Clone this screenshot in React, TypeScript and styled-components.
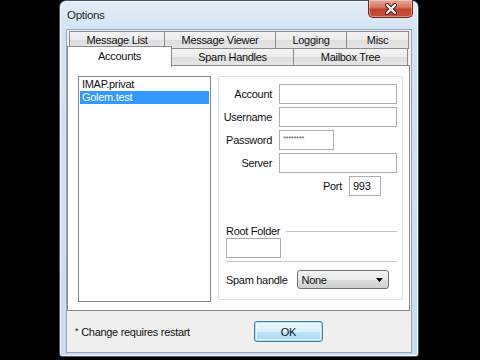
import React from "react";
import styled, { createGlobalStyle } from "styled-components";

const Global = createGlobalStyle`
  html, body { margin: 0; padding: 0; background: #000; }
  body { width: 480px; height: 360px; overflow: hidden; font-family: "Liberation Sans", Arial, sans-serif; font-size: 11px; letter-spacing: -0.3px; color: #111; }
`;

const Screen = styled.div`
  width: 480px;
  height: 360px;
  background: #000;
  display: flex;
  align-items: flex-start;
  padding-left: 59px;
  box-sizing: border-box;
`;

const Window = styled.div`
  width: 360px;
  height: 357px;
  box-sizing: border-box;
  border: 1px solid #4a5560;
  border-radius: 7px 7px 3px 3px;
  background: linear-gradient(#e3edf8 0px, #d4e3f4 30px, #c9dcf1 100%);
  box-shadow: inset 0 0 0 1px #f2f7fd;
  display: flex;
  flex-direction: column;
`;

const TitleBar = styled.div`
  height: 28px;
  display: flex;
  align-items: flex-start;
  justify-content: space-between;
  padding-left: 7px;
  padding-right: 5px;
`;

const Title = styled.div`
  font-family: "Liberation Sans", Arial, sans-serif;
  font-size: 11.5px;
  letter-spacing: -0.3px;
  color: #1e2a38;
  margin-top: 8px;
`;

const CloseButton = styled.div`
  width: 45px;
  height: 18px;
  margin-top: -1px;
  box-sizing: border-box;
  border: 1px solid #6e2a22;
  border-top: none;
  border-radius: 0 0 5px 5px;
  background: linear-gradient(#e9a99a 0%, #d87a68 40%, #c3432f 55%, #c9503a 100%);
  box-shadow: inset 0 0 0 1px rgba(255, 220, 210, 0.45);
  display: flex;
  align-items: center;
  justify-content: center;
`;

const Client = styled.div`
  margin: 0 6px 3px 6px;
  flex: 1;
  box-sizing: border-box;
  border: 1px solid #92a6bf;
  background: #f0f0f0;
  display: flex;
  flex-direction: column;
  padding-top: 1px;
`;

const TabRow = styled.div<{ $first?: boolean }>`
  display: flex;
  height: ${(p) => (p.$first ? 17 : 18)}px;
  padding-left: ${(p) => (p.$first ? 2 : 0)}px;
  position: relative;
  z-index: ${(p) => (p.$first ? 0 : 2)};
`;

const Tab = styled.div<{ $w: number; $selected?: boolean }>`
  width: ${(p) => p.$w}px;
  box-sizing: border-box;
  height: ${(p) => (p.$selected ? 21 : 18)}px;
  margin-top: ${(p) => (p.$selected ? -2 : 0)}px;
  border: 1px solid #898c95;
  border-bottom: ${(p) => (p.$selected ? "none" : "1px solid #898c95")};
  margin-left: -1px;
  background: ${(p) =>
    p.$selected ? "#ffffff" : "linear-gradient(#f3f3f3 0%, #ebebeb 50%, #dedede 51%, #e5e5e5 100%)"};
  display: flex;
  align-items: center;
  justify-content: center;
  padding-bottom: ${(p) => (p.$selected ? 3 : 1)}px;
  &:first-child { margin-left: 0; }
`;

const Panel = styled.div`
  width: 343px;
  height: 246px;
  margin-top: -1px;
  box-sizing: border-box;
  border: 1px solid #898c95;
  background: #fff;
  display: flex;
  gap: 7px;
  padding: 10px 6px 0 10px;
  position: relative;
  z-index: 1;
`;

const ListBox = styled.div`
  width: 133px;
  height: 226px;
  box-sizing: border-box;
  border: 1px solid #828790;
  padding: 1px;
  display: flex;
  flex-direction: column;
`;

const ListItem = styled.div<{ $selected?: boolean }>`
  height: 13px;
  line-height: 13px;
  padding-left: 2px;
  color: ${(p) => (p.$selected ? "#fff" : "#111")};
  background: ${(p) => (p.$selected ? "#3399ff" : "transparent")};
`;

const GroupBox = styled.div`
  width: 185px;
  height: 224px;
  box-sizing: border-box;
  border: 1px solid #d5dfe5;
  border-radius: 2px;
  padding: 7px 5px 0 0;
  display: flex;
  flex-direction: column;
`;

const Fields = styled.div`
  display: flex;
  flex-direction: column;
  gap: 3px;
`;

const FieldRow = styled.div`
  display: flex;
  align-items: center;
  height: 20px;
`;

const Label = styled.div<{ $w: number }>`
  width: ${(p) => p.$w}px;
  text-align: right;
  margin-right: 7px;
  white-space: nowrap;
`;

const TextBox = styled.div<{ $w: number }>`
  width: ${(p) => p.$w}px;
  height: 20px;
  box-sizing: border-box;
  border: 1px solid #abadb3;
  background: #fff;
  display: flex;
  align-items: center;
  padding-left: 3px;
`;

const Masked = styled.span`
  font-size: 8px;
  color: #666;
  letter-spacing: -0.5px;
  margin-top: -4px;
`;

const RootSection = styled.div`
  padding-left: 7px;
  margin-top: 28px;
  display: flex;
  flex-direction: column;
`;

const SectionHead = styled.div`
  display: flex;
  align-items: center;
  height: 13px;
  gap: 6px;
`;

const Rule = styled.div`
  flex: 1;
  height: 1px;
  background: #c5c5c5;
  margin-top: 2px;
`;

const Separator = styled.div`
  height: 1px;
  background: #c5c5c5;
  margin-top: 3px;
`;

const SpamRow = styled.div`
  display: flex;
  align-items: center;
  margin-top: 8px;
  gap: 9px;
`;

const Combo = styled.div`
  width: 92px;
  height: 19px;
  box-sizing: border-box;
  border: 1px solid #707070;
  border-radius: 3px;
  background: linear-gradient(#f2f2f2 0%, #ebebeb 50%, #dddddd 51%, #cfcfcf 100%);
  display: flex;
  align-items: center;
  justify-content: space-between;
  padding: 0 5px 0 4px;
`;

const Footer = styled.div`
  flex: 1;
  display: flex;
  align-items: center;
  padding-left: 8px;
`;

const Note = styled.div`
  display: flex;
  align-items: baseline;
  gap: 3px;
`;

const Star = styled.span`
  font-size: 9px;
  position: relative;
  top: -2px;
`;

const OkButton = styled.div`
  width: 69px;
  height: 21px;
  margin-left: auto;
  margin-right: 88px;
  box-sizing: border-box;
  border: 1px solid #3c7fb1;
  border-radius: 3px;
  background: linear-gradient(#eaf6fd 0%, #d9f0fc 50%, #bee6fd 51%, #a7d9f5 100%);
  box-shadow: inset 0 0 0 1px #aee2fb, inset 0 0 0 2px rgba(255, 255, 255, 0.6);
  display: flex;
  align-items: center;
  justify-content: center;
`;

const rowOne = [
  { label: "Message List", w: 96 },
  { label: "Message Viewer", w: 112 },
  { label: "Logging", w: 72 },
  { label: "Misc", w: 63 },
];

const rowTwo = [
  { label: "Accounts", w: 105, selected: true },
  { label: "Spam Handles", w: 123 },
  { label: "Mailbox Tree", w: 115 },
];

export default function App() {
  return (
    <>
      <Global />
      <Screen>
        <Window>
          <TitleBar>
            <Title>Options</Title>
            <CloseButton>
              <svg width="14" height="12" viewBox="0 0 14 12">
                <path d="M3 2 L11 10 M11 2 L3 10" stroke="#4a1a14" strokeWidth="4" strokeLinecap="round" />
                <path d="M3 2 L11 10 M11 2 L3 10" stroke="#ffffff" strokeWidth="2.2" strokeLinecap="round" />
              </svg>
            </CloseButton>
          </TitleBar>
          <Client>
            <TabRow $first>
              {rowOne.map((t) => (
                <Tab key={t.label} $w={t.w}>{t.label}</Tab>
              ))}
            </TabRow>
            <TabRow>
              {rowTwo.map((t) => (
                <Tab key={t.label} $w={t.w} $selected={t.selected}>{t.label}</Tab>
              ))}
            </TabRow>
            <Panel>
              <ListBox>
                <ListItem>IMAP.privat</ListItem>
                <ListItem $selected>Golem.test</ListItem>
              </ListBox>
              <GroupBox>
                <Fields>
                  <FieldRow>
                    <Label $w={53}>Account</Label>
                    <TextBox $w={118} />
                  </FieldRow>
                  <FieldRow>
                    <Label $w={53}>Username</Label>
                    <TextBox $w={118} />
                  </FieldRow>
                  <FieldRow>
                    <Label $w={53}>Password</Label>
                    <TextBox $w={55}>
                      <Masked>********</Masked>
                    </TextBox>
                  </FieldRow>
                  <FieldRow>
                    <Label $w={53}>Server</Label>
                    <TextBox $w={118} />
                  </FieldRow>
                  <FieldRow>
                    <Label $w={123}>Port</Label>
                    <TextBox $w={32}>993</TextBox>
                  </FieldRow>
                </Fields>
                <RootSection>
                  <SectionHead>
                    <span>Root Folder</span>
                    <Rule />
                  </SectionHead>
                  <TextBox $w={55} style={{ marginTop: 1 }} />
                  <Separator />
                  <SpamRow>
                    <span>Spam handle</span>
                    <Combo>
                      <span>None</span>
                      <svg width="7" height="4" viewBox="0 0 7 4">
                        <path d="M0 0 H7 L3.5 4 Z" fill="#000" />
                      </svg>
                    </Combo>
                  </SpamRow>
                </RootSection>
              </GroupBox>
            </Panel>
            <Footer>
              <Note>
                <Star>*</Star>
                <span>Change requires restart</span>
              </Note>
              <OkButton>OK</OkButton>
            </Footer>
          </Client>
        </Window>
      </Screen>
    </>
  );
}
